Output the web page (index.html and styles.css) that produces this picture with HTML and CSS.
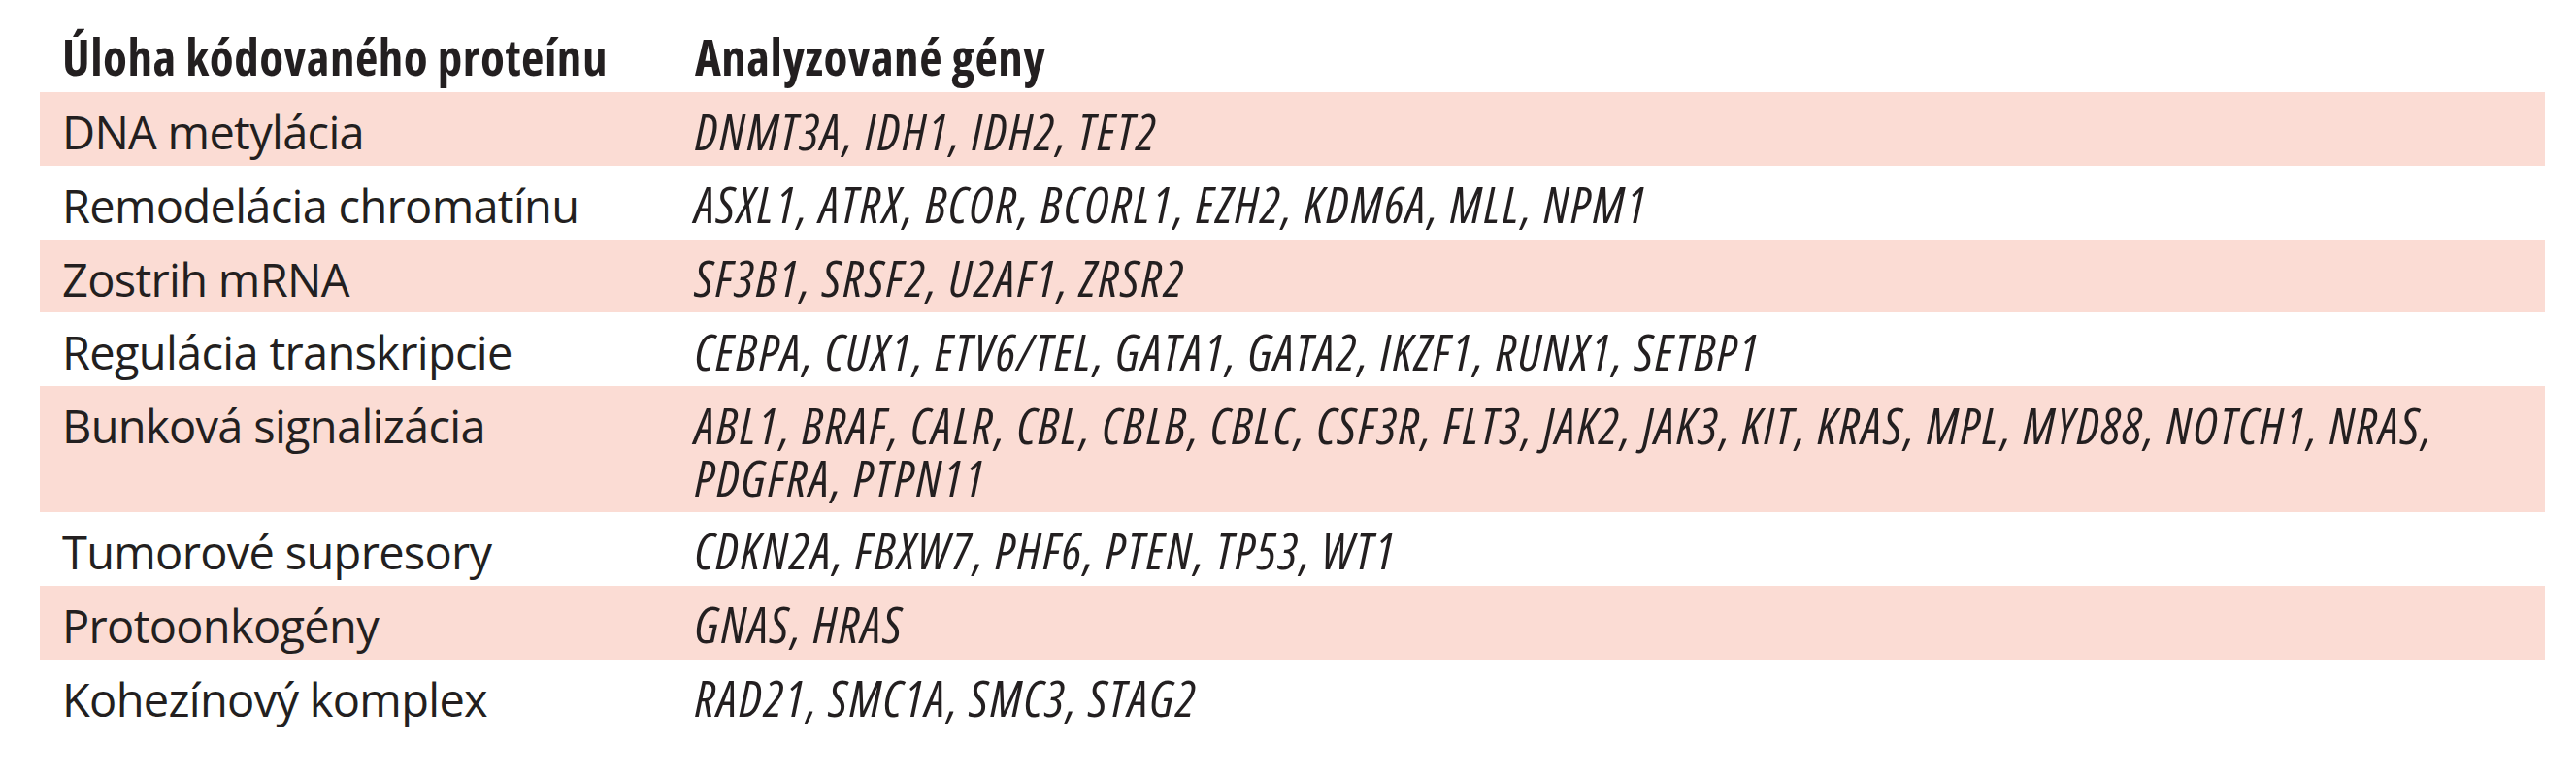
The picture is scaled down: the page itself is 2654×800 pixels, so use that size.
FILE: index.html
```html
<!DOCTYPE html>
<html lang="sk">
<head>
<meta charset="utf-8">
<title>Analyzované gény</title>
<link rel="stylesheet" href="styles.css">
</head>
<body>
<div class="table">
  <div class="row head">
    <div class="cell">Úloha kódovaného proteínu</div>
    <div class="cell">Analyzované gény</div>
  </div>
  <div class="row shade">
    <div class="cell label">DNA metylácia</div>
    <div class="cell genes">DNMT3A, IDH1, IDH2, TET2</div>
  </div>
  <div class="row">
    <div class="cell label">Remodelácia chromatínu</div>
    <div class="cell genes">ASXL1, ATRX, BCOR, BCORL1, EZH2, KDM6A, MLL, NPM1</div>
  </div>
  <div class="row shade">
    <div class="cell label">Zostrih mRNA</div>
    <div class="cell genes">SF3B1, SRSF2, U2AF1, ZRSR2</div>
  </div>
  <div class="row">
    <div class="cell label">Regulácia transkripcie</div>
    <div class="cell genes">CEBPA, CUX1, ETV6/TEL, GATA1, GATA2, IKZF1, RUNX1, SETBP1</div>
  </div>
  <div class="row shade">
    <div class="cell label">Bunková signalizácia</div>
    <div class="cell genes">ABL1, BRAF, CALR, CBL, CBLB, CBLC, CSF3R, FLT3, JAK2, JAK3, KIT, KRAS, MPL, MYD88, NOTCH1, NRAS,<br>PDGFRA, PTPN11</div>
  </div>
  <div class="row">
    <div class="cell label">Tumorové supresory</div>
    <div class="cell genes">CDKN2A, FBXW7, PHF6, PTEN, TP53, WT1</div>
  </div>
  <div class="row shade">
    <div class="cell label">Protoonkogény</div>
    <div class="cell genes">GNAS, HRAS</div>
  </div>
  <div class="row">
    <div class="cell label">Kohezínový komplex</div>
    <div class="cell genes">RAD21, SMC1A, SMC3, STAG2</div>
  </div>
</div>
</body>
</html>
```
FILE: styles.css
```css
html, body {
  margin: 0;
  padding: 0;
  background: #ffffff;
}
body {
  font-family: "Open Sans", "Liberation Sans", sans-serif;
  font-stretch: 75%;
  font-size: 51px;
  line-height: 54px;
  color: #231f20;
}
.table {
  margin-left: 41px;
  width: 2581px;
  display: flex;
  flex-direction: column;
}
.row {
  display: grid;
  grid-template-columns: 652px 1fr;
  align-items: start;
}
.cell {
  padding: 12.5px 23px 9.3px 23px;
}
.head {
  height: 95px;
  align-items: end;
}
.head .cell {
  font-weight: 700;
  font-stretch: 75%;
  letter-spacing: 0.5px;
  padding-bottom: 10px;
}
.label {
  font-stretch: 100%;
  font-size: 47px;
  letter-spacing: -0.7px;
  padding-top: 14px;
  padding-bottom: 7.8px;
}
.shade {
  background: #fbdcd4;
}
.genes {
  font-style: italic;
  letter-spacing: 2.2px;
}
```
